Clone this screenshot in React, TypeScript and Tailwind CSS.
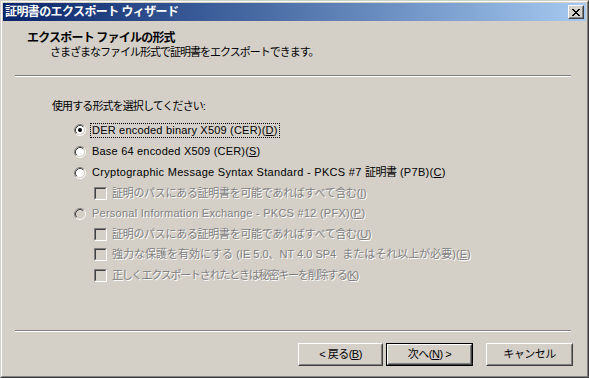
import React from 'react';

function Radio({ checked = false, disabled = false }: { checked?: boolean; disabled?: boolean }) {
  return (
    <svg width="12" height="12" viewBox="0 0 12 12" className="shrink-0">
      <circle cx="6" cy="6" r="4.5" fill={disabled ? '#d4d0c8' : '#ffffff'} />
      <path d="M2.11 9.89A5.5 5.5 0 0 1 9.89 2.11" stroke="#808080" fill="none" />
      <path d="M9.89 2.11A5.5 5.5 0 0 1 2.11 9.89" stroke="#ffffff" fill="none" />
      <path d="M2.82 9.18A4.5 4.5 0 0 1 9.18 2.82" stroke="#404040" fill="none" />
      <path d="M9.18 2.82A4.5 4.5 0 0 1 2.82 9.18" stroke="#d4d0c8" fill="none" />
      {checked && <circle cx="6" cy="6" r="2" fill="#000000" />}
    </svg>
  );
}

function Check() {
  return (
    <div className="w-[13px] h-[13px] shrink-0 border border-t-[#808080] border-l-[#808080] border-r-white border-b-white">
      <div className="h-full w-full border border-t-[#404040] border-l-[#404040] border-r-[#d4d0c8] border-b-[#d4d0c8] bg-[#d4d0c8]" />
    </div>
  );
}

function Btn({ children, isDefault = false, w }: { children: React.ReactNode; isDefault?: boolean; w: string }) {
  return (
    <div className={`${w} h-[23px] ${isDefault ? 'border border-black' : ''}`}>
      <div className="h-full border border-t-white border-l-white border-r-[#404040] border-b-[#404040]">
        <div className="h-full flex items-center justify-center border border-t-[#d4d0c8] border-l-[#d4d0c8] border-r-[#808080] border-b-[#808080] text-[11px] tracking-[-0.5px] text-black">
          {children}
        </div>
      </div>
    </div>
  );
}

const dis = 'text-[#808080] [text-shadow:1px_1px_0_#ffffff]';

export default function App() {
  return (
    <div className="w-[589px] h-[378px] bg-[#d4d0c8] border border-t-[#d4d0c8] border-l-[#d4d0c8] border-r-[#404040] border-b-[#404040] [font-family:'Liberation_Sans','Noto_Sans_CJK_JP',sans-serif] text-black select-none">
      <div className="h-full flex flex-col p-px border border-t-white border-l-white border-r-[#808080] border-b-[#808080]">
        {/* title bar */}
        <div className="h-[18px] shrink-0 flex items-center justify-between pl-[2px] pr-[2px] bg-gradient-to-r from-[#0a246a] to-[#a6caf0]">
          <span className="text-white font-bold text-[12px] leading-[16px] tracking-[-0.6px]">証明書のエクスポート ウィザード</span>
          <div className="w-[16px] h-[14px] border border-t-white border-l-white border-r-[#404040] border-b-[#404040] bg-[#d4d0c8]">
            <div className="h-full border border-t-[#d4d0c8] border-l-[#d4d0c8] border-r-[#808080] border-b-[#808080] flex items-center justify-center">
              <svg width="8" height="7" viewBox="0 0 8 7" shapeRendering="crispEdges">
                <path fill="#000" d="M0 0h2v1H0zM6 0h2v1H6zM1 1h2v1H1zM5 1h2v1H5zM2 2h4v1H2zM3 3h2v1H3zM2 4h4v1H2zM1 5h2v1H1zM5 5h2v1H5zM0 6h2v1H0zM6 6h2v1H6z" />
              </svg>
            </div>
          </div>
        </div>

        {/* body */}
        <div className="flex-1 mt-px flex flex-col">
          <div className="pt-[8px] pl-[24px]">
            <div className="font-bold text-[12px] leading-[16px] tracking-[-0.8px]">エクスポート ファイルの形式</div>
            <div className="mt-[-1px] pl-[23px] text-[11px] leading-[14px] tracking-[-1px]">さまざまなファイル形式で証明書をエクスポートできます。</div>
          </div>
          <div className="mt-[16px] ml-[12px] mr-[15px]">
            <div className="h-px bg-[#808080]" />
            <div className="h-px bg-white" />
          </div>

          <div className="flex-1 flex flex-col">
            <div className="mt-[22px] pl-[49px] text-[11px] leading-[14px] tracking-[-0.9px]">使用する形式を選択してください:</div>
            <div className="mt-[6px] flex flex-col text-[11px] leading-[13px]">
              <div className="h-[22px] flex items-center gap-[4px] pl-[71px]">
                <Radio checked />
                <span className="border border-dotted border-black px-px tracking-[0.2px]">
                  DER encoded binary X509 (CER)(<span className="underline">D</span>)
                </span>
              </div>
              <div className="h-[21px] flex items-center gap-[4px] pl-[71px]">
                <Radio />
                <span className="border border-transparent px-px tracking-[0.2px]">
                  Base 64 encoded X509 (CER)(<span className="underline">S</span>)
                </span>
              </div>
              <div className="h-[21px] flex items-center gap-[4px] pl-[71px]">
                <Radio />
                <span className="border border-transparent px-px tracking-[0.3px]">
                  Cryptographic Message Syntax Standard - PKCS #7 <span className="tracking-[-0.5px]">証明書</span> (P7B)(<span className="underline">C</span>)
                </span>
              </div>
              <div className="h-[20px] flex items-center gap-[3px] pl-[91px]">
                <Check />
                <span className={`border border-transparent px-px tracking-[-0.3px] ${dis}`}>
                  証明のパスにある証明書を可能であればすべて含む(<span className="underline">I</span>)
                </span>
              </div>
              <div className="h-[21px] flex items-center gap-[4px] pl-[71px]">
                <Radio disabled />
                <span className={`border border-transparent px-px tracking-[0.25px] ${dis}`}>
                  Personal Information Exchange - PKCS #12 (PFX)(<span className="underline">P</span>)
                </span>
              </div>
              <div className="h-[20px] flex items-center gap-[3px] pl-[91px]">
                <Check />
                <span className={`border border-transparent px-px tracking-[-0.3px] ${dis}`}>
                  証明のパスにある証明書を可能であればすべて含む(<span className="underline">U</span>)
                </span>
              </div>
              <div className="h-[21px] flex items-center gap-[3px] pl-[91px]">
                <Check />
                <span className={`border border-transparent px-px tracking-[0px] ${dis}`}>
                  強力な保護を有効にする (IE 5.0、NT 4.0 SP4 &nbsp;またはそれ以上が必要)(<span className="underline">E</span>)
                </span>
              </div>
              <div className="h-[21px] flex items-center gap-[3px] pl-[91px]">
                <Check />
                <span className={`border border-transparent px-px tracking-[-1.2px] ${dis}`}>
                  正しくエクスポートされたときは秘密キーを削除する(<span className="underline">K</span>)
                </span>
              </div>
            </div>
          </div>

          <div className="ml-[12px] mr-[15px]">
            <div className="h-px bg-[#808080]" />
            <div className="h-px bg-white" />
          </div>
          <div className="mt-[11px] mb-[9px] pr-[13px] flex justify-end">
            <Btn w="w-[85px]">&lt; 戻る(<span className="underline">B</span>)</Btn>
            <div className="ml-[3px]">
              <Btn w="w-[87px]" isDefault>
                次へ(<span className="underline">N</span>) &gt;
              </Btn>
            </div>
            <div className="ml-[13px]">
              <Btn w="w-[87px]">キャンセル</Btn>
            </div>
          </div>
        </div>
      </div>
    </div>
  );
}
